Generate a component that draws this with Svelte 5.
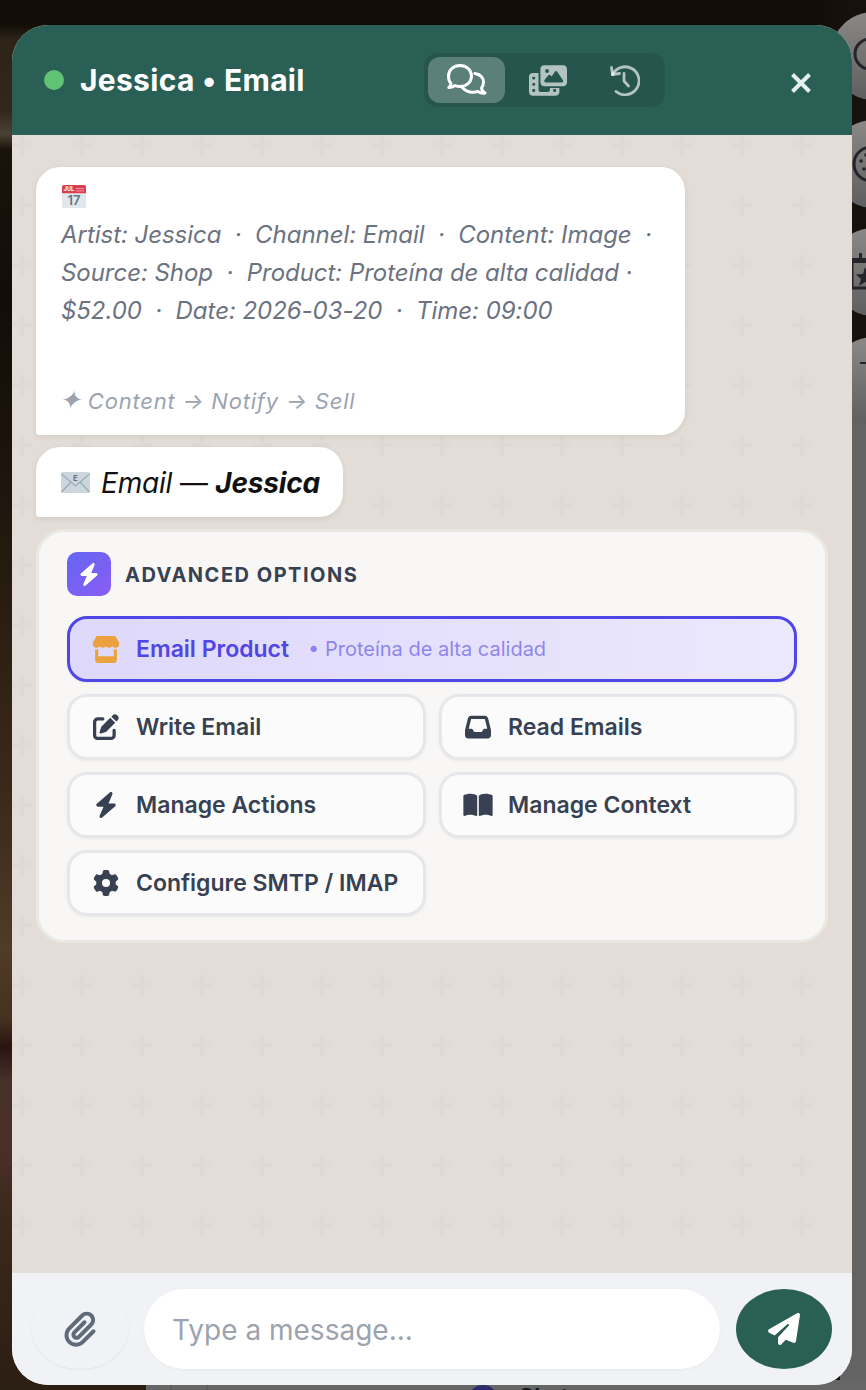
<script>
  const icons = {
    store: { box: '0 0 576 512', d: 'M547.6 103.8L490.3 13.1C485.2 5 476.1 0 466.4 0H109.6C99.9 0 90.8 5 85.7 13.1L28.3 103.8c-29.6 46.8-3.4 111.9 51.9 119.4c4 .5 8.1 .8 12.1 .8c26.1 0 49.3-11.4 65.2-29c15.9 17.6 39.1 29 65.2 29c26.1 0 49.3-11.4 65.2-29c15.9 17.6 39.1 29 65.2 29c26.2 0 49.3-11.4 65.2-29c16 17.6 39.1 29 65.2 29c4.1 0 8.1-.3 12.1-.8c55.5-7.4 81.8-72.5 52.1-119.4zM499.7 254.9l-.1 0c-5.3 .7-10.7 1.1-16.2 1.1c-12.4 0-24.3-1.9-35.4-5.3V384H128V250.6c-11.2 3.5-23.2 5.4-35.6 5.4c-5.5 0-11-.4-16.3-1.1l-.1 0c-4.1-.6-8.1-1.3-12-2.3V384v64c0 35.3 28.7 64 64 64H448c35.3 0 64-28.7 64-64V384 252.6c-4 1-8 1.8-12.3 2.3z' },
    pen: { box: '0 0 512 512', d: 'M471.6 21.7c-21.9-21.9-57.3-21.9-79.2 0L362.3 51.7l97.9 97.9 30.1-30.1c21.9-21.9 21.9-57.3 0-79.2L471.6 21.7zm-299.2 220c-6.1 6.1-10.8 13.6-13.5 21.9l-29.6 88.8c-2.9 8.6-.6 18.1 5.8 24.6s15.9 8.7 24.6 5.8l88.8-29.6c8.2-2.7 15.7-7.4 21.9-13.5L437.7 172.3 339.7 74.3 172.4 241.7zM96 64C43 64 0 107 0 160V416c0 53 43 96 96 96H352c53 0 96-43 96-96V320c0-17.7-14.3-32-32-32s-32 14.3-32 32v96c0 17.7-14.3 32-32 32H96c-17.7 0-32-14.3-32-32V160c0-17.7 14.3-32 32-32h96c17.7 0 32-14.3 32-32s-14.3-32-32-32H96z' },
    inbox: { box: '0 0 512 512', d: 'M121 32C91.6 32 66 52 58.9 80.5L1.9 308.4C.6 313.5 0 318.7 0 323.9V416c0 35.3 28.7 64 64 64H448c35.3 0 64-28.7 64-64V323.9c0-5.2-.6-10.4-1.9-15.5l-57-227.9C446 52 420.4 32 391 32H121zm0 64H391l48 192H387.8c-12.1 0-23.2 6.8-28.6 17.7l-14.3 28.6c-5.4 10.8-16.5 17.7-28.6 17.7H195.8c-12.1 0-23.2-6.8-28.6-17.7l-14.3-28.6c-5.4-10.8-16.5-17.7-28.6-17.7H73L121 96z' },
    bolt: { box: '0 0 448 512', d: 'M349.4 44.6c5.9-13.7 1.5-29.7-10.6-38.5s-28.6-8-39.9 1.8l-256 224c-10 8.8-13.6 22.9-8.9 35.3S50.7 288 64 288H175.5L98.6 467.4c-5.9 13.7-1.5 29.7 10.6 38.5s28.6 8 39.9-1.8l256-224c10-8.8 13.6-22.9 8.9-35.3s-16.6-20.7-30-20.7H272.5L349.4 44.6z' },
    book: { box: '0 0 576 512', d: 'M249.6 471.5c10.8 3.8 22.4-4.1 22.4-15.5V78.6c0-4.2-1.6-8.4-5-11C247.4 52 202.4 32 144 32C93.5 32 46.3 45.3 18.1 56.1C6.8 60.5 0 71.7 0 83.8V454.1c0 11.9 12.8 20.2 24.1 16.5C55.6 460.1 105.5 448 144 448c33.9 0 79 14 105.6 23.5zm76.8 0C353 462 398.1 448 432 448c38.5 0 88.4 12.1 119.9 22.6c11.3 3.8 24.1-4.6 24.1-16.5V83.8c0-12.1-6.8-23.3-18.1-27.6C529.7 45.3 482.5 32 432 32c-58.4 0-103.4 20-123 35.6c-3.3 2.6-5 6.8-5 11V456c0 11.4 11.7 19.3 22.4 15.5z' },
    gear: { box: '0 0 512 512', d: 'M495.9 166.6c3.2 8.7 .5 18.4-6.4 24.6l-43.3 39.4c1.1 8.3 1.7 16.8 1.7 25.4s-.6 17.1-1.7 25.4l43.3 39.4c6.9 6.2 9.6 15.9 6.4 24.6c-4.4 11.9-9.7 23.3-15.8 34.3l-4.7 8.1c-6.6 11-14 21.4-22.1 31.2c-5.9 7.2-15.7 9.6-24.5 6.8l-55.7-17.7c-13.4 10.3-28.2 18.9-44 25.4l-12.5 57.1c-2 9.1-9 16.3-18.2 17.8c-13.8 2.3-28 3.5-42.5 3.5s-28.7-1.2-42.5-3.5c-9.2-1.5-16.2-8.7-18.2-17.8l-12.5-57.1c-15.8-6.5-30.6-15.1-44-25.4L83.1 425.9c-8.8 2.8-18.6 .3-24.5-6.8c-8.1-9.8-15.5-20.2-22.1-31.2l-4.7-8.1c-6.1-11-11.4-22.4-15.8-34.3c-3.2-8.7-.5-18.4 6.4-24.6l43.3-39.4C64.6 273.1 64 264.6 64 256s.6-17.1 1.7-25.4L22.4 191.2c-6.9-6.2-9.6-15.9-6.4-24.6c4.4-11.9 9.7-23.3 15.8-34.3l4.7-8.1c6.6-11 14-21.4 22.1-31.2c5.9-7.2 15.7-9.6 24.5-6.8l55.7 17.7c13.4-10.3 28.2-18.9 44-25.4l12.5-57.1c2-9.1 9-16.3 18.2-17.8C227.3 1.2 241.5 0 256 0s28.7 1.2 42.5 3.5c9.2 1.5 16.2 8.7 18.2 17.8l12.5 57.1c15.8 6.5 30.6 15.1 44 25.4l55.7-17.7c8.8-2.8 18.6-.3 24.5 6.8c8.1 9.8 15.5 20.2 22.1 31.2l4.7 8.1c6.1 11 11.4 22.4 15.8 34.3zM256 336a80 80 0 1 0 0-160 80 80 0 1 0 0 160z' },
    clip: { box: '0 0 448 512', d: 'M364.2 83.8c-24.4-24.4-64-24.4-88.4 0l-184 184c-42.1 42.1-42.1 110.3 0 152.4s110.3 42.1 152.4 0l152-152c10.9-10.9 28.7-10.9 39.6 0s10.9 28.7 0 39.6l-152 152c-64 64-167.6 64-231.6 0s-64-167.6 0-231.6l184-184c46.3-46.3 121.3-46.3 167.6 0s46.3 121.3 0 167.6l-176 176c-28.6 28.6-75 28.6-103.6 0s-28.6-75 0-103.6l144-144c10.9-10.9 28.7-10.9 39.6 0s10.9 28.7 0 39.6l-144 144c-6.7 6.7-6.7 17.7 0 24.4s17.7 6.7 24.4 0l176-176c24.4-24.4 24.4-64 0-88.4z' },
    plane: { box: '0 0 512 512', d: 'M498.1 5.6c10.1 7 15.4 19.1 13.5 31.2l-64 416c-1.5 9.7-7.4 18.2-16 23s-18.9 5.4-28 1.6L284 427.7l-68.5 74.1c-8.9 9.7-22.9 12.9-35.2 8.1S160 493.2 160 480V396.4c0-4 1.5-7.8 4.2-10.7L331.8 202.8c5.8-6.3 5.6-16-.4-22s-15.7-6.4-22-.7L106 360.8 17.7 316.6C7.1 311.3 .3 300.7 0 288.9s5.9-22.8 16.1-28.7l448-256c10.7-6.1 23.9-5.5 34 1.4z' },
    film: { box: '0 0 640 512', d: 'M256 0H576c35.3 0 64 28.7 64 64V288c0 35.3-28.7 64-64 64H256c-35.3 0-64-28.7-64-64V64c0-35.3 28.7-64 64-64zM476 106.7C471.5 100 464 96 456 96s-15.5 4-20 10.7l-56 84L362.7 169c-4.6-5.7-11.5-9-18.7-9s-14.2 3.3-18.7 9l-64 80c-5.8 7.2-6.9 17.1-2.9 25.4s12.4 13.6 21.6 13.6h80 48H552c8.9 0 17-4.9 21.2-12.7s3.7-17.3-1.2-24.6l-96-144zM336 96a32 32 0 1 0 -64 0 32 32 0 1 0 64 0zM64 128h96V384v32c0 17.7 14.3 32 32 32H320c17.7 0 32-14.3 32-32V384H512v64c0 35.3-28.7 64-64 64H64c-35.3 0-64-28.7-64-64V192c0-35.3 28.7-64 64-64zm8 64c-8.8 0-16 7.2-16 16v16c0 8.8 7.2 16 16 16H88c8.8 0 16-7.2 16-16V208c0-8.8-7.2-16-16-16H72zm0 104c-8.8 0-16 7.2-16 16v16c0 8.8 7.2 16 16 16H88c8.8 0 16-7.2 16-16V312c0-8.8-7.2-16-16-16H72zm0 104c-8.8 0-16 7.2-16 16v16c0 8.8 7.2 16 16 16H88c8.8 0 16-7.2 16-16V416c0-8.8-7.2-16-16-16H72zm336 16v16c0 8.8 7.2 16 16 16h16c8.8 0 16-7.2 16-16V416c0-8.8-7.2-16-16-16H424c-8.8 0-16 7.2-16 16z' }
  }

  const options = [
    { label: 'Write Email', icon: 'pen' },
    { label: 'Read Emails', icon: 'inbox' },
    { label: 'Manage Actions', icon: 'bolt' },
    { label: 'Manage Context', icon: 'book' },
    { label: 'Configure SMTP / IMAP', icon: 'gear' }
  ]
</script>

{#snippet glyph(name, cls, fit = 'xMidYMid meet')}
  <svg class={cls} viewBox={icons[name].box} preserveAspectRatio={fit} fill="currentColor" aria-hidden="true">
    <path d={icons[name].d} />
  </svg>
{/snippet}

<div class="scene">
  <!-- what sits behind the chat window -->
  <div class="backdrop">
    <div class="side"></div>
    <div class="strip"></div>
    <div class="fab fab-1">
      <svg class="fab-icon" viewBox="0 0 40 40" fill="none" stroke="currentColor" stroke-width="3"><circle cx="19" cy="18" r="15" /></svg>
    </div>
    <div class="fab fab-2">
      <svg class="fab-icon" viewBox="0 0 40 40" fill="none" stroke="currentColor" stroke-width="3">
        <circle cx="20" cy="20" r="17" />
        <circle cx="10" cy="17" r="1.8" fill="currentColor" stroke="none" />
        <circle cx="15" cy="11" r="1.8" fill="currentColor" stroke="none" />
        <circle cx="13" cy="25" r="1.8" fill="currentColor" stroke="none" />
        <path d="M18 33V14" stroke-width="4" />
      </svg>
    </div>
    <div class="fab fab-3">
      <svg class="fab-icon" viewBox="0 0 40 40" fill="currentColor">
        <path d="M0 6h40v5H0zM8 1h3v6H8z" />
        <path d="M1 8v28h38" fill="none" stroke="currentColor" stroke-width="3" />
        <path d="M14 15l3 7 7 .5-5.5 4.5 2 7-6.500-4-6 4 2-7L5 22.500l7-.5z" />
      </svg>
    </div>
    <div class="fab fab-4"><span class="fab-dash"></span></div>
    <div class="peek">
      <span class="peek-dot"></span>
      <span class="peek-text">Chat</span>
    </div>
  </div>

  <section class="window">
    <header class="head">
      <span class="status"></span>
      <h1 class="title">Jessica • Email</h1>

      <div class="tabs">
        <button class="tab active" aria-label="Chat">
          <svg class="tab-chat" viewBox="0 0 40 32" fill="none" stroke="currentColor" stroke-width="3" stroke-linejoin="round" stroke-linecap="round">
            <path d="M4 19.500C2 17.500 1.500 15 1.500 12C1.500 6 6.500 1.500 13 1.500S24.500 6 24.500 12S19.500 22.500 13 22.500C11 22.500 9.500 22.200 8 21.600C6 23 4 23.500 1.800 23.500C3 22.500 4 21 4 19.500Z" />
            <path d="M28 9.500C33 10.500 36.500 13.500 36.500 18C36.500 20.500 35.800 22.500 34.500 24C34.700 26 36 27.800 38 29C35.500 29.500 33 28.800 31 27.400C29.500 28 28 28.300 26 28.300C22 28.300 18 26.500 15.500 23.800" />
          </svg>
        </button>
        <button class="tab" aria-label="Media">{@render glyph('film', 'tab-film')}</button>
        <button class="tab" aria-label="History">
          <svg class="tab-clock" viewBox="0 0 32 32" fill="none" stroke="currentColor" stroke-width="2.800" stroke-linecap="round" stroke-linejoin="round">
            <path d="M4.500 10.500A14 14 0 1 1 8 27.500" />
            <path d="M3.500 3.500L4.500 10.500L11.500 9.500" />
            <path d="M16 9.500V17L20.500 22" />
          </svg>
        </button>
      </div>

      <button class="close" aria-label="Close">
        <svg viewBox="0 0 22 22" fill="none" stroke="currentColor" stroke-width="4"><path d="M2.500 2.500L19.500 19.500M19.500 2.500L2.500 19.500" /></svg>
      </button>
    </header>

    <main class="messages">
      <article class="bubble summary">
        <div class="emoji-row">
          <svg class="calendar" viewBox="0 0 26 26" aria-hidden="true">
            <rect y="1" width="26" height="25" rx="2" fill="#e1e8ed" />
            <path d="M0 10V3a2 2 0 0 1 2-2h22a2 2 0 0 1 2 2v7z" fill="#d93f50" />
            <text x="2" y="8" class="cal-month">JUL</text>
            <path d="M15 5h9M15 7.500h9" stroke="#f3a0a8" stroke-width="1" />
            <text x="13" y="23" class="cal-day">17</text>
          </svg>
        </div>
        <p class="meta">Artist: Jessica &nbsp;·&nbsp; Channel: Email &nbsp;·&nbsp; Content: Image &nbsp;· Source: Shop &nbsp;·&nbsp; Product: Proteína de alta calidad · $52.00 &nbsp;·&nbsp; Date: 2026-03-20 &nbsp;·&nbsp; Time: 09:00</p>
        <p class="flow"><span class="spark">✦</span> Content → Notify → Sell</p>
      </article>

      <article class="bubble heading">
        <svg class="envelope" viewBox="0 0 29 22" aria-hidden="true">
          <rect width="29" height="21" rx="2" fill="#ccd6dd" />
          <path d="M0.500 2L14.500 14L28.500 2" fill="none" stroke="#99aab5" stroke-width="1.200" />
          <path d="M0.500 20L10 10M28.500 20L19 10" fill="none" stroke="#99aab5" stroke-width="1.200" />
          <text x="14.500" y="9" class="env-letter">E</text>
        </svg>
        <span class="heading-text">Email — <strong>Jessica</strong></span>
      </article>

      <section class="panel">
        <div class="panel-head">
          <span class="panel-badge">{@render glyph('bolt', 'badge-bolt')}</span>
          <h2 class="panel-title">ADVANCED OPTIONS</h2>
        </div>

        <button class="option primary">
          <span class="option-icon store">{@render glyph('store', 'icon-store', 'none')}</span>
          <span class="option-label">Email Product</span>
          <span class="option-sub">• Proteína de alta calidad</span>
        </button>

        <div class="option-grid">
          {#each options as opt}
            <button class="option">
              <span class="option-icon">{@render glyph(opt.icon, 'icon')}</span>
              <span class="option-label">{opt.label}</span>
            </button>
          {/each}
        </div>
      </section>
    </main>

    <footer class="composer">
      <button class="attach" aria-label="Attach">{@render glyph('clip', 'attach-icon')}</button>
      <input class="field" type="text" placeholder="Type a message..." />
      <button class="send" aria-label="Send">{@render glyph('plane', 'send-icon')}</button>
    </footer>
  </section>
</div>

<style>
  :global(body) {
    margin: 0;
    font-family: 'Inter', 'Liberation Sans', sans-serif;
  }

  * {
    box-sizing: border-box;
  }

  button {
    font-family: inherit;
    cursor: pointer;
  }

  .scene {
    position: relative;
    width: 866px;
    height: 1390px;
    overflow: hidden;
    padding: 25px 0 0 12px;
  }

  .backdrop {
    position: absolute;
    inset: 0;
    background:
      linear-gradient(90deg, transparent 820px, #17110b 846px),
      linear-gradient(180deg,
        #120d07 0, #120d07 24px, #2e2317 40px, #33271b 110px, #4a4034 134px, #1a130c 150px,
        #120d08 300px, #1f160d 500px, #3b2a1a 800px, #503b27 950px, #46301f 1020px,
        #2a1410 1046px, #47302a 1080px, #4a2f2a 1150px, #3c291d 1210px, #2b1e13 1390px);
  }

  .side {
    position: absolute;
    left: 840px;
    right: 0;
    top: 400px;
    bottom: 0;
    background: #636363;
  }

  .strip {
    position: absolute;
    left: 146px;
    right: 0;
    top: 1380px;
    bottom: 0;
    background:
      linear-gradient(90deg, transparent 24px, #5c5c5c 24px, #5c5c5c 26px, transparent 26px, transparent 60px, #5c5c5c 60px, #5c5c5c 62px, transparent 62px),
      #666;
  }

  .fab {
    position: absolute;
    left: 830px;
    width: 88px;
    height: 88px;
    border-radius: 50%;
    background: linear-gradient(180deg, #8b8987, #5e5e5e);
    color: #24242a;
  }

  .fab-1 { top: 12px; }
  .fab-2 { top: 120px; }
  .fab-3 { top: 228px; }
  .fab-4 { top: 337px; }

  .fab-icon {
    position: absolute;
    left: 21px;
    top: 24px;
    width: 40px;
    height: 40px;
  }

  .fab-dash {
    position: absolute;
    left: 30px;
    top: 25px;
    width: 10px;
    height: 2px;
    background: #24242a;
  }

  .peek {
    position: absolute;
    left: 468px;
    top: 1385px;
    display: flex;
    gap: 20px;
  }

  .peek-dot {
    width: 30px;
    height: 30px;
    border-radius: 50%;
    background: #2e2a6e;
  }

  .peek-text {
    font-size: 22px;
    line-height: 22px;
    font-weight: 700;
    color: #16161c;
  }

  .window {
    position: relative;
    width: 840px;
    height: 1360px;
    display: flex;
    flex-direction: column;
    border-radius: 36px;
    overflow: hidden;
    background: #e4ddd7;
  }

  .head {
    flex: none;
    height: 110px;
    display: flex;
    align-items: center;
    padding: 0 32px;
    background: #2a5f55;
    color: #fff;
  }

  .status {
    width: 20px;
    height: 20px;
    border-radius: 50%;
    background: #5fc373;
  }

  .title {
    margin: 0 0 0 16px;
    font-size: 30px;
    letter-spacing: 0.3px;
    font-weight: 700;
    line-height: 34px;
  }

  .tabs {
    margin-left: auto;
    display: flex;
    gap: 1px;
    padding: 4px;
    border-radius: 14px;
    background: rgba(0, 0, 0, 0.1);
  }

  .tab {
    width: 77px;
    height: 46px;
    display: flex;
    align-items: center;
    justify-content: center;
    border: none;
    border-radius: 12px;
    background: none;
    color: rgba(255, 255, 255, 0.65);
    padding: 0;
  }

  .tab.active {
    background: rgba(255, 255, 255, 0.25);
    color: #fff;
  }

  .tab-chat { width: 40px; height: 32px; }
  .tab-film { width: 38px; height: 31px; margin-left: 7px; }
  .tab-clock { width: 32px; height: 32px; margin-left: 3px; }

  .close {
    width: 38px;
    height: 38px;
    margin: 6px 0 0 117px;
    display: flex;
    align-items: center;
    justify-content: center;
    border: none;
    border-radius: 10px;
    padding: 0;
    background: rgba(255, 255, 255, 0);
    color: #e4efec;
  }

  .close svg {
    width: 22px;
    height: 22px;
  }

  .messages {
    flex: 1;
    display: flex;
    flex-direction: column;
    align-items: flex-start;
    gap: 12px;
    padding: 32px 24px 0;
    background-color: #e4ddd7;
    background-image: url("data:image/svg+xml,%3Csvg xmlns='http://www.w3.org/2000/svg' width='60' height='60'%3E%3Cpath d='M8 0h4v8h8v4h-8v8H8v-8H0V8h8z' fill='%23000' fill-opacity='.018'/%3E%3C/svg%3E");
  }

  .bubble {
    background: #fff;
    border-radius: 24px 24px 24px 4px;
    box-shadow: 0 2px 6px rgba(0, 0, 0, 0.08);
  }

  .summary {
    width: 649px;
    height: 268px;
    padding: 10px 25px 0;
  }

  .emoji-row {
    height: 39px;
    display: flex;
    align-items: center;
  }

  .calendar {
    width: 24px;
    height: 24px;
    margin: 0 0 2px 1px;
  }

  .cal-month {
    font-size: 6px;
    font-weight: 700;
    fill: #fff;
  }

  .cal-day {
    font-size: 14px;
    font-weight: 600;
    fill: #66757f;
    text-anchor: middle;
  }

  .meta {
    margin: 0;
    font-size: 24px;
    line-height: 38px;
    font-style: italic;
    letter-spacing: -0.04px;
    color: #6b7280;
  }

  .flow {
    margin: 54px 0 0;
    font-size: 22px;
    line-height: 34px;
    font-style: italic;
    letter-spacing: 0.8px;
    color: #9ca3af;
  }

  .spark {
    font-size: 26px;
    line-height: 20px;
    margin: 0 -1px 0 -2px;
  }

  .heading {
    height: 70px;
    display: flex;
    align-items: center;
    gap: 11px;
    padding: 2px 23px 0 25px;
  }

  .envelope {
    width: 29px;
    height: 22px;
  }

  .env-letter {
    font-size: 8px;
    font-weight: 700;
    fill: #66757f;
    text-anchor: middle;
  }

  .heading-text {
    font-size: 28px;
    font-style: italic;
    letter-spacing: -0.2px;
    color: #111;
  }

  .panel {
    align-self: stretch;
    border: 3px solid #ebe8e3;
    border-radius: 28px;
    background: #f9f7f5;
    padding: 20px 28px 24px;
    display: flex;
    flex-direction: column;
    gap: 12px;
  }

  .panel-head {
    display: flex;
    align-items: center;
    gap: 14px;
    margin-bottom: 8px;
  }

  .panel-badge {
    width: 44px;
    height: 44px;
    display: flex;
    align-items: center;
    justify-content: center;
    border-radius: 10px;
    background: linear-gradient(135deg, #6366f1, #8b5cf6);
    color: #fff;
  }

  .badge-bolt {
    width: 20px;
    height: 23px;
  }

  .panel-title {
    margin: 2px 0 0;
    font-size: 20px;
    font-weight: 700;
    letter-spacing: 1.5px;
    color: #374151;
  }

  .option-grid {
    display: grid;
    grid-template-columns: 359px 358px;
    gap: 12px 13px;
  }

  .option {
    height: 66px;
    width: 100%;
    display: flex;
    align-items: center;
    padding: 0 0 0 21px;
    border: 3px solid #e5e7eb;
    border-radius: 20px;
    background: #fbfbfb;
    box-shadow: 0 1px 3px rgba(0, 0, 0, 0.06);
    color: #374151;
  }

  .option-icon {
    flex: none;
    width: 30px;
    margin-right: 15px;
    display: flex;
    justify-content: center;
  }

  .icon {
    width: 30px;
    height: 26px;
  }

  .icon-store {
    width: 28px;
    height: 27px;
  }

  .option-label {
    font-size: 23px;
    font-weight: 600;
    white-space: nowrap;
  }

  .primary {
    border-color: #4f46e5;
    background: linear-gradient(90deg, #ded8fb, #ece8fd);
    color: #4f46e5;
  }

  .store {
    color: #eba23e;
  }

  .option-sub {
    margin-left: 19px;
    font-size: 20px;
    color: rgba(79, 70, 229, 0.6);
    white-space: nowrap;
  }

  .composer {
    flex: none;
    height: 112px;
    display: flex;
    align-items: center;
    gap: 16px;
    padding: 0 20px;
    background: #f0f2f6;
  }

  .attach,
  .send {
    flex: none;
    width: 96px;
    height: 80px;
    display: flex;
    align-items: center;
    justify-content: center;
    border: none;
    border-radius: 50%;
    padding: 0;
  }

  .attach {
    background: #f0f2f6;
    color: #5f6b78;
    box-shadow: 0 1px 3px rgba(0, 0, 0, 0.06);
  }

  .attach-icon {
    width: 32px;
    height: 36px;
  }

  .field {
    flex: 1;
    min-width: 0;
    height: 80px;
    border: none;
    outline: none;
    border-radius: 40px;
    padding: 2px 28px 0;
    background: #fff;
    font-family: inherit;
    font-size: 28px;
    box-shadow: 0 1px 3px rgba(0, 0, 0, 0.04);
  }

  .field::placeholder {
    color: #9ca3af;
  }

  .send {
    background: #2a5f55;
    color: #fff;
  }

  .send-icon {
    width: 32px;
    height: 32px;
  }
</style>
